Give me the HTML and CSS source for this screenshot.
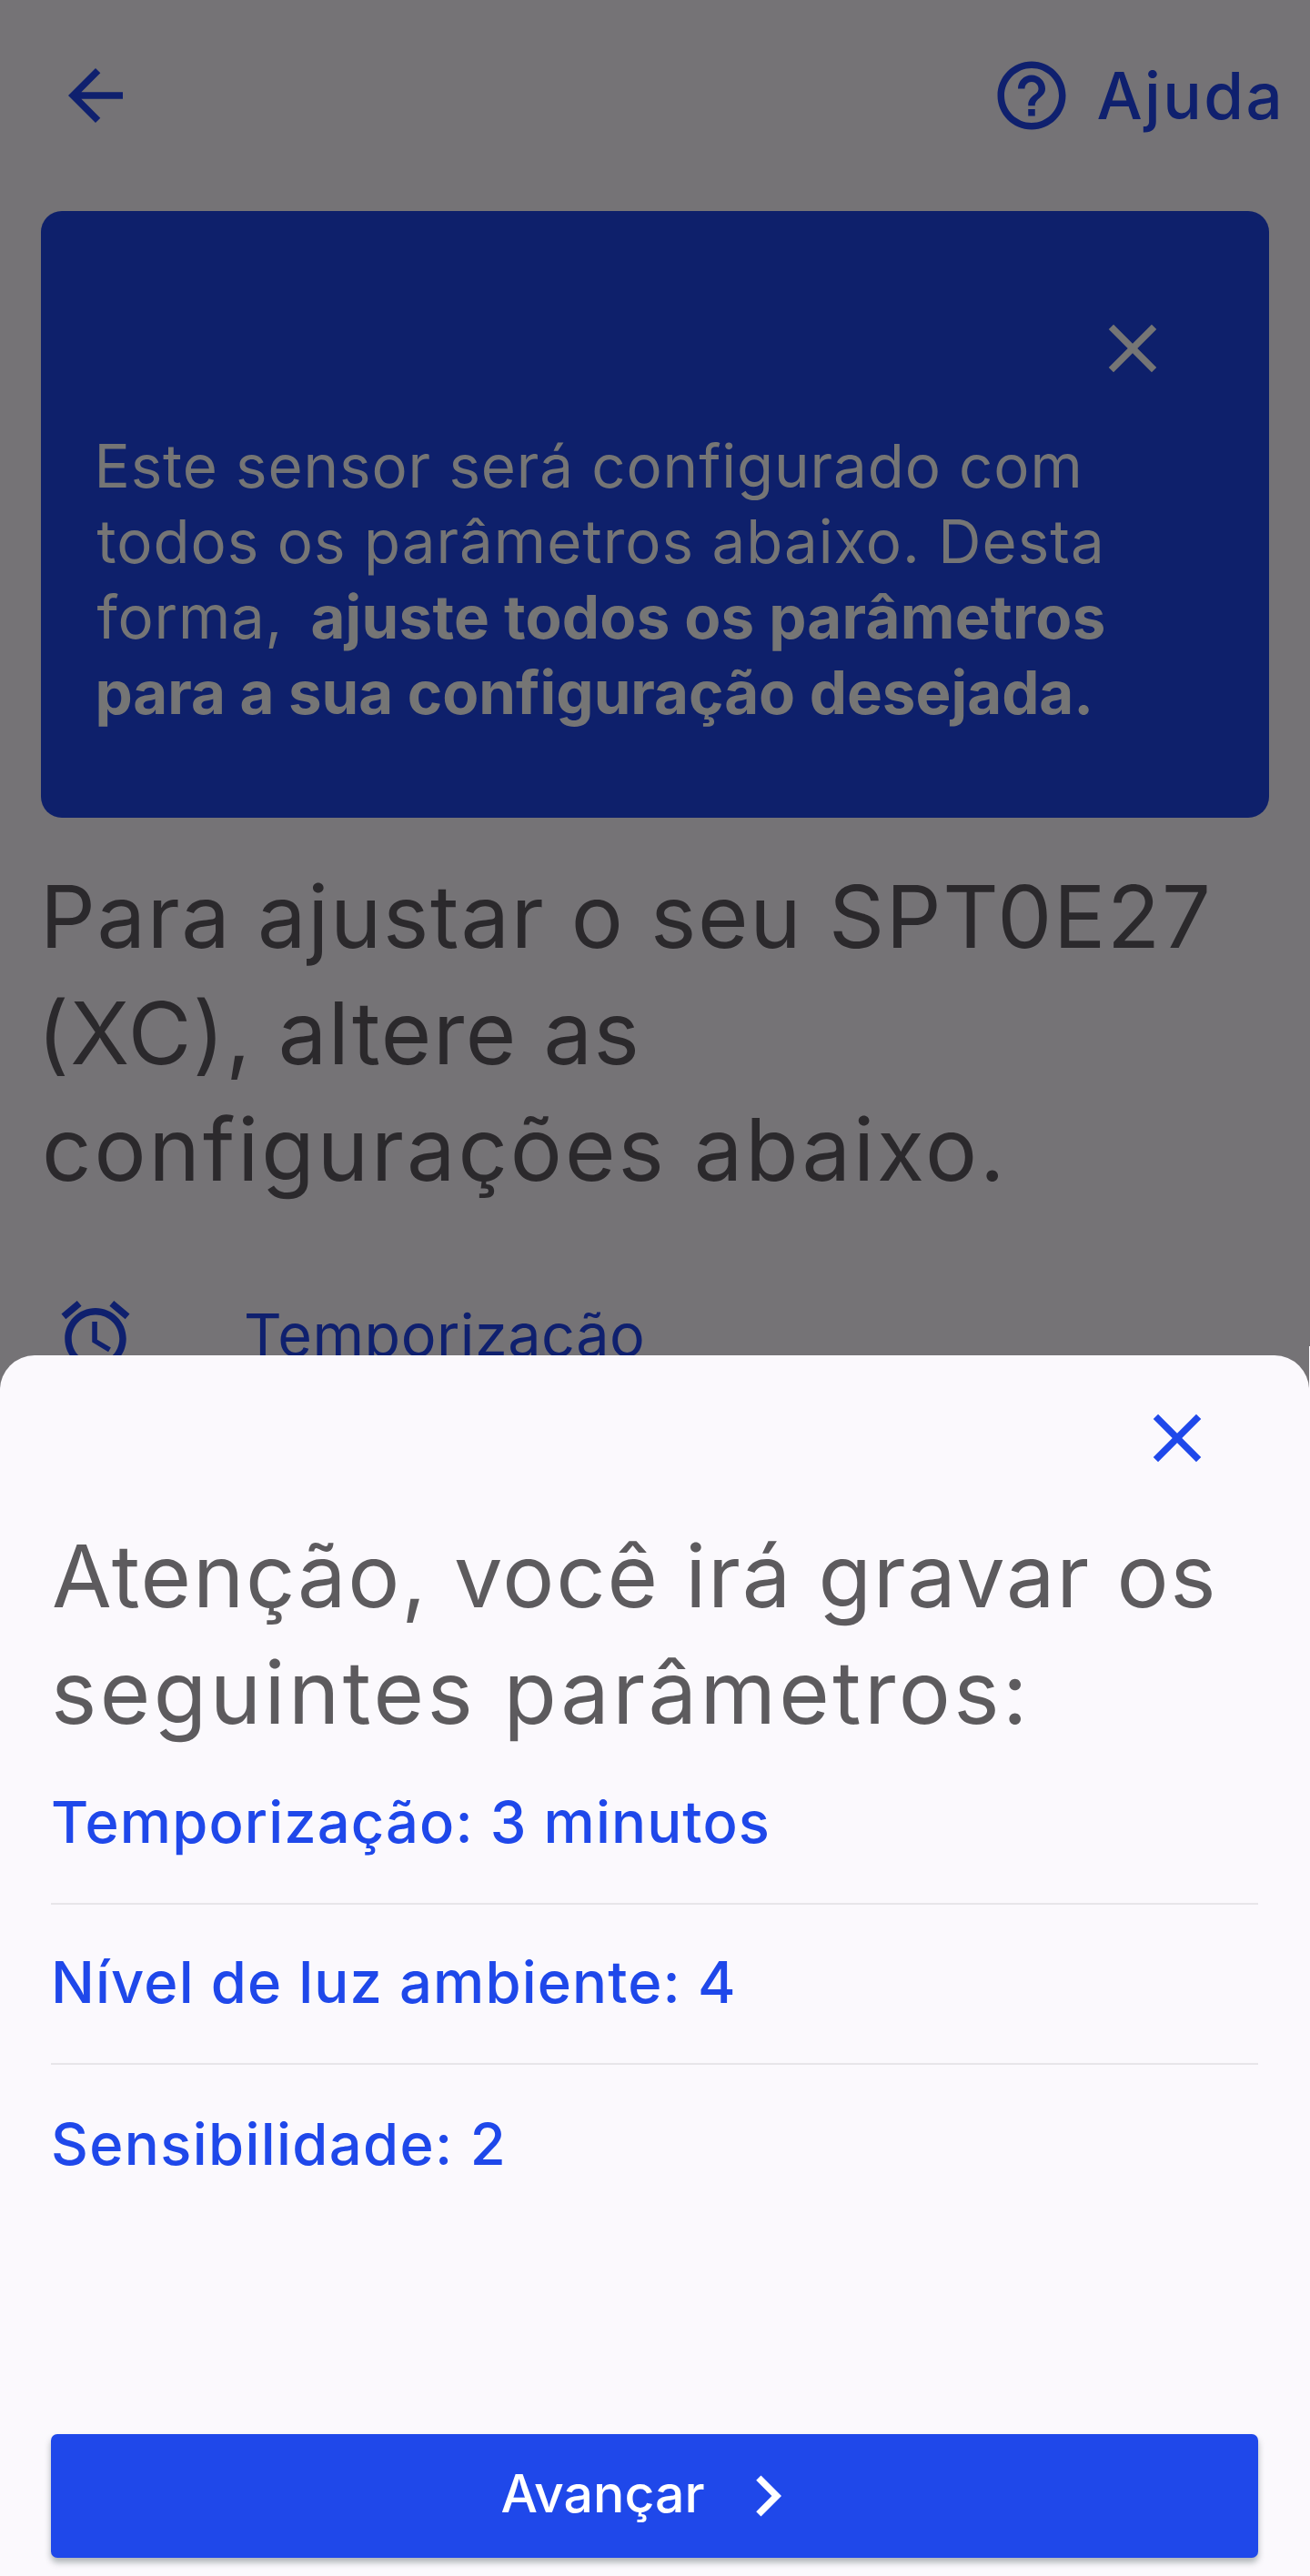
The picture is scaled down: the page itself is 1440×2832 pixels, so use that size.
FILE: index.html
```html
<!DOCTYPE html>
<html lang="pt-BR">
<head>
  <meta charset="utf-8">
  <title>Configurar sensor</title>
  <link rel="stylesheet" href="styles.css">
</head>
<body>
  <div class="screen">
    <header class="topbar">
      <svg class="icon" viewBox="0 0 24 24"><path d="M20 11H7.83l5.59-5.59L12 4l-8 8 8 8 1.41-1.41L7.83 13H20v-2z"/></svg>
      <div class="help">
        <svg class="icon" viewBox="0 0 24 24"><path d="M11 18h2v-2h-2v2zm1-16C6.48 2 2 6.48 2 12s4.48 10 10 10 10-4.48 10-10S17.52 2 12 2zm0 18c-4.41 0-8-3.59-8-8s3.59-8 8-8 8 3.59 8 8-3.59 8-8 8zm0-14c-2.21 0-4 1.79-4 4h2c0-1.1.9-2 2-2s2 .9 2 2c0 2-3 1.75-3 5h2c0-2.25 3-2.5 3-5 0-2.21-1.79-4-4-4z"/></svg>
        <span class="help-label">Ajuda</span>
      </div>
    </header>

    <section class="notice">
      <svg class="icon notice-close" viewBox="0 0 24 24"><path d="M19 6.41L17.59 5 12 10.59 6.41 5 5 6.41 10.59 12 5 17.59 6.41 19 12 13.41 17.59 19 19 17.59 13.41 12z"/></svg>
      <p class="notice-text">
        <span class="line n1">Este sensor será configurado com</span>
        <span class="line n2">todos os parâmetros abaixo. Desta</span>
        <span class="line n3">forma, <b>ajuste todos os parâmetros</b></span>
        <span class="line n4"><b>para a sua configuração desejada.</b></span>
      </p>
    </section>

    <h1 class="title">
      <span class="line t1">Para ajustar o seu SPT0E27</span>
      <span class="line t2">(XC), altere as</span>
      <span class="line t3">configurações abaixo.</span>
    </h1>

    <div class="option">
      <svg class="icon" viewBox="0 0 24 24"><path d="M22 5.72l-4.6-3.86-1.29 1.53 4.6 3.86L22 5.72zM7.88 3.39L6.6 1.86 2 5.71l1.29 1.53 4.59-3.85zM12.5 8H11v6l4.75 2.85.75-1.23-4-2.37V8zM12 4c-4.97 0-9 4.03-9 9s4.02 9 9 9c4.97 0 9-4.03 9-9s-4.03-9-9-9zm0 16c-3.87 0-7-3.13-7-7s3.13-7 7-7 7 3.13 7 7-3.13 7-7 7z"/></svg>
      <span>Temporização</span>
    </div>

    <div class="edge"></div>

    <section class="sheet">
      <svg class="icon sheet-close" viewBox="0 0 24 24"><path d="M19 6.41L17.59 5 12 10.59 6.41 5 5 6.41 10.59 12 5 17.59 6.41 19 12 13.41 17.59 19 19 17.59 13.41 12z"/></svg>
      <h2 class="sheet-title">
        <span class="line s1">Atenção, você irá gravar os</span>
        <span class="line s2">seguintes parâmetros:</span>
      </h2>
      <ul class="params">
        <li>Temporização: 3 minutos</li>
        <li>Nível de luz ambiente: 4</li>
        <li class="last">Sensibilidade: 2</li>
      </ul>
      <button class="next">
        <span class="next-label">Avançar</span>
        <svg class="icon" viewBox="0 0 24 24"><path d="M10 6L8.59 7.41 13.17 12l-4.58 4.59L10 18l6-6z"/></svg>
      </button>
    </section>
  </div>
</body>
</html>
```
FILE: styles.css
```css
* {
  box-sizing: border-box;
}

body {
  margin: 0;
  font-family: Inter, "Liberation Sans", sans-serif;
}

h1, h2, p, ul {
  margin: 0;
  padding: 0;
  font-weight: 400;
}

.screen {
  position: relative;
  width: 1440px;
  height: 2832px;
  overflow: hidden;
  background: #757376;
}

.icon {
  display: block;
  flex: none;
  width: 90px;
  height: 90px;
  fill: currentColor;
}

.line {
  display: block;
  white-space: nowrap;
}

.topbar {
  display: flex;
  align-items: center;
  justify-content: space-between;
  height: 232px;
  padding: 0 28px 22px 60px;
  color: #0f206e;
}

.help {
  display: flex;
  align-items: center;
  gap: 26px;
}

.help-label {
  font-size: 70.8px;
  font-weight: 500;
  line-height: 90px;
  letter-spacing: 2.4px;
  margin-top: -1px;
}

.notice {
  width: 1350px;
  height: 667px;
  margin-left: 44.5px;
  padding: 106px 105px 0 59px;
  border-radius: 23px;
  background: #0e206b;
  color: #757575;
}

.notice-close {
  margin-left: auto;
}

.notice-text {
  margin-top: 43px;
  font-size: 65.4px;
  line-height: 83px;
}

.n1 { letter-spacing: 0.9px; }
.n2 { padding-left: 3px; letter-spacing: 1.03px; }
.n3 { padding-left: 3px; letter-spacing: 0.79px; }
.n3 b { margin-left: 11px; letter-spacing: 0.25px; }
.n4 { padding-left: 1px; letter-spacing: 0; }

.title {
  margin-top: 45px;
  padding-left: 44px;
  font-size: 95.3px;
  line-height: 128px;
  color: #2b292c;
}

.t1 { letter-spacing: 1.7px; }
.t2 { margin-left: -3px; letter-spacing: 1.6px; }
.t3 { padding-left: 2px; letter-spacing: 3px; }

.option {
  display: flex;
  align-items: center;
  gap: 118px;
  margin-top: 95px;
  padding-left: 60px;
  font-size: 64.7px;
  line-height: 90px;
  letter-spacing: 0.5px;
  color: #0f206e;
}

/* Bright sliver beside the sheet's right corner */
.edge {
  position: absolute;
  top: 1480px;
  right: 0;
  bottom: 0;
  width: 1px;
  background: #fbf9fd;
}

.sheet {
  position: absolute;
  left: 0;
  right: 1px;
  bottom: 0;
  height: 1342.5px;
  padding: 46px 56px 0;
  border-radius: 38px 38px 0 0;
  background: #fbf9fd;
}

.sheet-close {
  margin-left: auto;
  margin-right: 44.5px;
  color: #1f48ea;
}

.sheet-title {
  margin-top: 43px;
  font-size: 95.3px;
  line-height: 128px;
  color: #5d5b5e;
}

.s1 { padding-left: 1px; letter-spacing: 1.74px; }
.s2 { letter-spacing: 3.45px; }

.params {
  list-style: none;
  font-size: 63.3px;
  font-weight: 500;
  line-height: 80px;
  letter-spacing: 1.12px;
  color: #1f48ea;
}

.params li {
  padding: 45px 0 49px;
  border-bottom: 2px solid #e7e5e9;
}

.params li:first-child {
  padding-top: 38px;
}

.params .last {
  padding: 47px 0 0;
  border-bottom: 0;
  letter-spacing: 1.35px;
}

.next {
  display: flex;
  align-items: center;
  justify-content: center;
  gap: 24px;
  width: 1327px;
  height: 136px;
  margin-top: 279px;
  padding: 0;
  border: 0;
  border-radius: 7px;
  background: #1f48ea;
  box-shadow: 0 5px 7px rgba(30, 50, 50, 0.35);
  color: #fff;
  font-family: inherit;
  font-size: 57.2px;
  font-weight: 500;
}

.next-label {
  padding-bottom: 4px;
}
```
